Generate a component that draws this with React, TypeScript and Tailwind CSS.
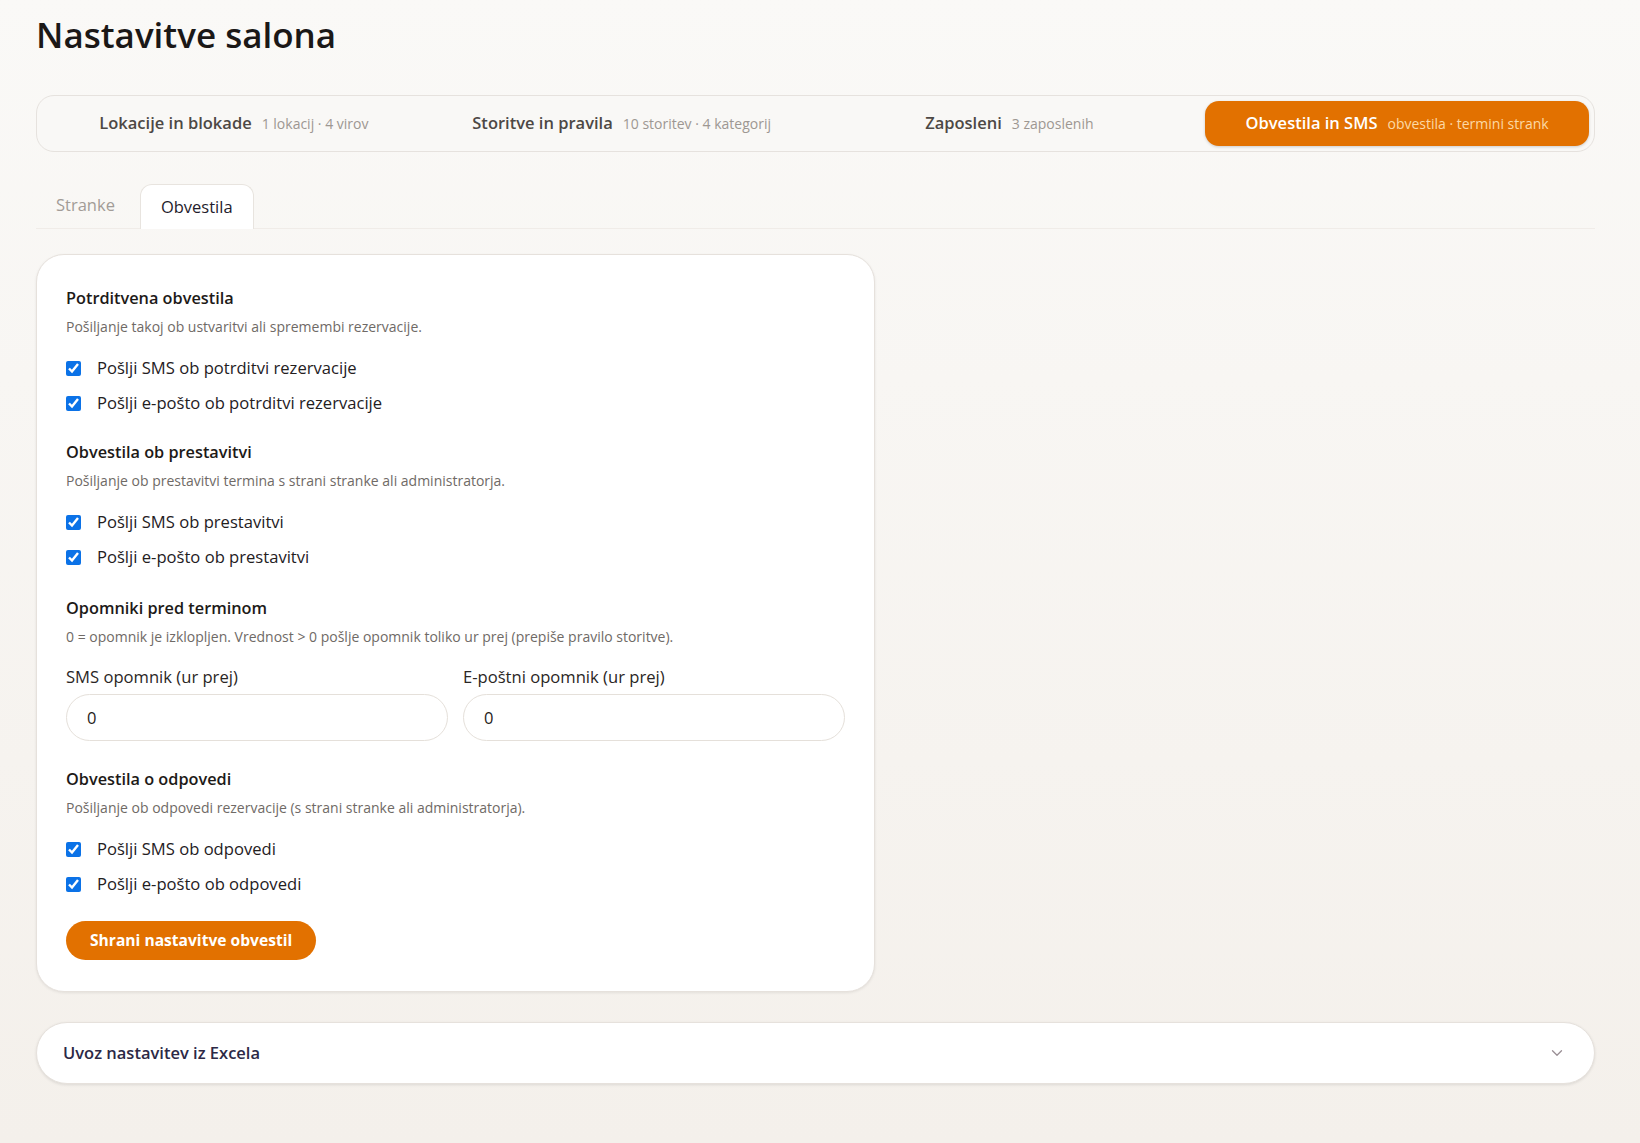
import { ChevronDown } from 'lucide-react';

const font = { fontFamily: '"Open Sans", "Noto Sans", sans-serif' };

const topTabs = [
  { label: 'Lokacije in blokade', meta: '1 lokacij · 4 virov' },
  { label: 'Storitve in pravila', meta: '10 storitev · 4 kategorij' },
  { label: 'Zaposleni', meta: '3 zaposlenih' },
  { label: 'Obvestila in SMS', meta: 'obvestila · termini strank', active: true },
];

function SectionHead({ title, desc }: { title: string; desc: string }) {
  return (
    <>
      <h3 className="text-[16.3px] leading-6 font-semibold text-[#1d1a18]">{title}</h3>
      <p className="mt-[7px] text-[14px] leading-5 text-[#6f6a66]">{desc}</p>
    </>
  );
}

function Check({ label }: { label: string }) {
  return (
    <label className="flex items-center gap-[16px] h-6 text-[16.6px] text-[#24201e]">
      <input type="checkbox" defaultChecked className="w-[15px] h-[15px] accent-[#0b72e7]" />
      <span>{label}</span>
    </label>
  );
}

export default function App() {
  return (
    <div
      style={font}
      className="min-h-[1143px] bg-gradient-to-b from-[#faf9f7] to-[#f4f0eb] px-[36px] pt-[15px]"
    >
      <div className="w-[1559px]">
        <h1 className="text-[35px] leading-10 font-semibold text-[#1b1817]">Nastavitve salona</h1>

        <div className="mt-[40px] h-[57px] rounded-[18px] border border-[#e6e2de] bg-[#f9f8f6] p-[5px] grid grid-cols-4 gap-[4px]">
          {topTabs.map((t) => (
            <div
              key={t.label}
              className={
                t.active
                  ? 'flex items-center justify-center gap-[10px] rounded-[14px] bg-[#e27100] shadow-[0_1px_3px_rgba(0,0,0,0.18)]'
                  : 'flex items-center justify-center gap-[10px] rounded-[14px]'
              }
            >
              <span
                className={
                  t.active
                    ? 'text-[16.5px] font-semibold text-white'
                    : 'text-[16.5px] font-semibold text-[#4d4845]'
                }
              >
                {t.label}
              </span>
              <span className={t.active ? 'text-[14px] text-[#fcd9a6]' : 'text-[14px] text-[#9d9792]'}>
                {t.meta}
              </span>
            </div>
          ))}
        </div>

        <div className="mt-[31px] flex items-end gap-[5px] border-b border-[#f0ece8]">
          <button className="h-[45px] px-[20px] text-[16.5px] font-medium text-[#a29c97]">Stranke</button>
          <button className="h-[45px] px-[20px] -mb-px rounded-t-[12px] border border-b-0 border-[#e8e4df] bg-white text-[16.5px] font-medium text-[#1f1c2c]">
            Obvestila
          </button>
        </div>

        <div className="mt-[25px] w-[839px] rounded-[28px] border border-[#e6e1dc] bg-white px-[29px] pt-[31px] pb-[31px] shadow-[0_1px_3px_rgba(0,0,0,0.08)]">
          <SectionHead title="Potrditvena obvestila" desc="Pošiljanje takoj ob ustvaritvi ali spremembi rezervacije." />
          <div className="mt-[19px] flex flex-col gap-[11px]">
            <Check label="Pošlji SMS ob potrditvi rezervacije" />
            <Check label="Pošlji e-pošto ob potrditvi rezervacije" />
          </div>

          <div className="mt-[25px]">
            <SectionHead
              title="Obvestila ob prestavitvi"
              desc="Pošiljanje ob prestavitvi termina s strani stranke ali administratorja."
            />
          </div>
          <div className="mt-[19px] flex flex-col gap-[11px]">
            <Check label="Pošlji SMS ob prestavitvi" />
            <Check label="Pošlji e-pošto ob prestavitvi" />
          </div>

          <div className="mt-[27px]">
            <SectionHead
              title="Opomniki pred terminom"
              desc="0 = opomnik je izklopljen. Vrednost > 0 pošlje opomnik toliko ur prej (prepiše pravilo storitve)."
            />
          </div>
          <div className="mt-[18px] grid grid-cols-2 gap-[15px]">
            {['SMS opomnik (ur prej)', 'E-poštni opomnik (ur prej)'].map((l) => (
              <div key={l}>
                <div className="text-[16.6px] leading-6 text-[#2a2624]">{l}</div>
                <input
                  defaultValue="0"
                  className="mt-[5px] h-[47px] w-full rounded-full border border-[#e5e0da] bg-white px-[20px] text-[16.5px] text-[#1f1c1a] outline-none"
                />
              </div>
            ))}
          </div>

          <div className="mt-[26px]">
            <SectionHead
              title="Obvestila o odpovedi"
              desc="Pošiljanje ob odpovedi rezervacije (s strani stranke ali administratorja)."
            />
          </div>
          <div className="mt-[19px] flex flex-col gap-[11px]">
            <Check label="Pošlji SMS ob odpovedi" />
            <Check label="Pošlji e-pošto ob odpovedi" />
          </div>

          <button className="mt-[25px] h-[39px] px-[24px] rounded-full bg-[#e27100] text-[15.6px] font-bold text-white">
            Shrani nastavitve obvestil
          </button>
        </div>

        <div className="mt-[30px] h-[62px] rounded-full border border-[#e6e1dc] bg-white pl-[26px] pr-[28px] flex items-center justify-between shadow-[0_1px_3px_rgba(0,0,0,0.1)]">
          <span className="text-[16.5px] font-semibold text-[#2c2946]">Uvoz nastavitev iz Excela</span>
          <ChevronDown className="w-[18px] h-[18px] text-[#9a8f95]" strokeWidth={1.75} />
        </div>
      </div>
    </div>
  );
}
